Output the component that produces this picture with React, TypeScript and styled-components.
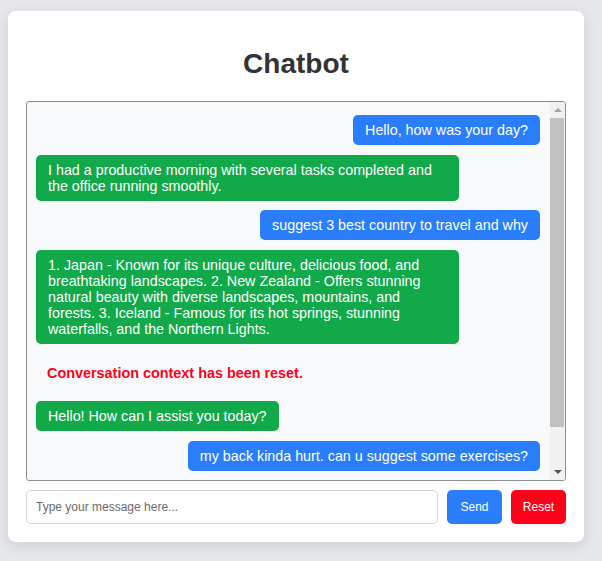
import React from "react";
import styled, { createGlobalStyle } from "styled-components";

const GlobalStyle = createGlobalStyle`
  html, body {
    margin: 0;
    padding: 0;
    background: #e5e7eb;
    font-family: "Liberation Sans", Arial, sans-serif;
  }
  * { box-sizing: border-box; }
`;

const Page = styled.div`
  padding: 11px 0 19px 8px;
`;

const Card = styled.div`
  width: 576px;
  background: #ffffff;
  border-radius: 8px;
  box-shadow: 0 4px 14px rgba(0, 0, 0, 0.1);
  padding: 0 18px 18px 18px;
  display: flex;
  flex-direction: column;
`;

const Title = styled.h1`
  margin: 37px 0 21px;
  font-size: 28px;
  line-height: 32px;
  font-weight: 700;
  color: #333333;
  text-align: center;
`;

const ChatWindow = styled.div`
  height: 380px;
  border: 1px solid #8e8e8e;
  border-radius: 3px;
  background: #f8f9fa;
  display: flex;
  overflow: hidden;
`;

const MessageList = styled.div`
  flex: 1;
  min-width: 0;
  overflow: hidden;
  padding: 13px 10px 0 9px;
  display: flex;
  flex-direction: column;
  gap: 9.7px;
`;

const ScrollBar = styled.div`
  width: 15px;
  flex: none;
  background: #f1f1f1;
  display: flex;
  flex-direction: column;
`;

const ScrollButton = styled.div`
  height: 16px;
  flex: none;
  display: flex;
  align-items: center;
  justify-content: center;
`;

const Arrow = styled.span<{ $dir: "up" | "down" }>`
  width: 0;
  height: 0;
  border-left: 4px solid transparent;
  border-right: 4px solid transparent;
  ${(p) =>
    p.$dir === "up"
      ? "border-bottom: 4px solid #a3a3a3;"
      : "border-top: 4px solid #505050;"}
`;

const ScrollTrack = styled.div`
  flex: 1;
  padding: 0 1px 0 0;
`;

const ScrollThumb = styled.div`
  height: 309px;
  background: #c1c1c1;
`;

type Kind = "user" | "bot" | "system";

const Bubble = styled.div<{ $kind: Kind }>`
  align-self: ${(p) => (p.$kind === "user" ? "flex-end" : "flex-start")};
  flex: none;
  max-width: 84%;
  padding: ${(p) => (p.$kind === "system" ? "11px 11px" : "7px 12px")};
  border-radius: 5px;
  font-size: ${(p) => (p.$kind === "system" ? "14.4px" : "14.3px")};
  line-height: 16px;
  font-weight: ${(p) => (p.$kind === "system" ? 700 : 400)};
  color: ${(p) => (p.$kind === "system" ? "#ff001a" : "#ffffff")};
  background: ${(p) =>
    p.$kind === "user" ? "#2a7efc" : p.$kind === "bot" ? "#12a94b" : "transparent"};
`;

const InputRow = styled.div`
  display: flex;
  gap: 9px;
  margin-top: 9px;
`;

const TextInput = styled.input`
  flex: 1;
  height: 34px;
  border: 1px solid #d1d5db;
  border-radius: 5px;
  padding: 0 9px;
  font-family: "Liberation Sans", Arial, sans-serif;
  font-size: 12px;
  color: #333;
  background: #fff;
  outline: none;
  &::placeholder { color: #6b6b6b; }
`;

const ActionButton = styled.button<{ $variant: "send" | "reset" }>`
  width: 55px;
  height: 34px;
  border: none;
  border-radius: 5px;
  font-family: "Liberation Sans", Arial, sans-serif;
  font-size: 12px;
  color: #ffffff;
  background: ${(p) => (p.$variant === "send" ? "#2a7efc" : "#ff001a")};
  cursor: pointer;
  padding: 0;
`;

const messages: { kind: Kind; text: string }[] = [
  { kind: "user", text: "Hello, how was your day?" },
  {
    kind: "bot",
    text: "I had a productive morning with several tasks completed and the office running smoothly.",
  },
  { kind: "user", text: "suggest 3 best country to travel and why" },
  {
    kind: "bot",
    text: "1. Japan - Known for its unique culture, delicious food, and breathtaking landscapes. 2. New Zealand - Offers stunning natural beauty with diverse landscapes, mountains, and forests. 3. Iceland - Famous for its hot springs, stunning waterfalls, and the Northern Lights.",
  },
  { kind: "system", text: "Conversation context has been reset." },
  { kind: "bot", text: "Hello! How can I assist you today?" },
  { kind: "user", text: "my back kinda hurt. can u suggest some exercises?" },
];

export default function App() {
  return (
    <>
      <GlobalStyle />
      <Page>
        <Card>
          <Title>Chatbot</Title>
          <ChatWindow>
            <MessageList>
              {messages.map((m, i) => (
                <Bubble key={i} $kind={m.kind}>
                  {m.text}
                </Bubble>
              ))}
            </MessageList>
            <ScrollBar>
              <ScrollButton>
                <Arrow $dir="up" />
              </ScrollButton>
              <ScrollTrack>
                <ScrollThumb />
              </ScrollTrack>
              <ScrollButton>
                <Arrow $dir="down" />
              </ScrollButton>
            </ScrollBar>
          </ChatWindow>
          <InputRow>
            <TextInput placeholder="Type your message here..." />
            <ActionButton $variant="send">Send</ActionButton>
            <ActionButton $variant="reset">Reset</ActionButton>
          </InputRow>
        </Card>
      </Page>
    </>
  );
}
